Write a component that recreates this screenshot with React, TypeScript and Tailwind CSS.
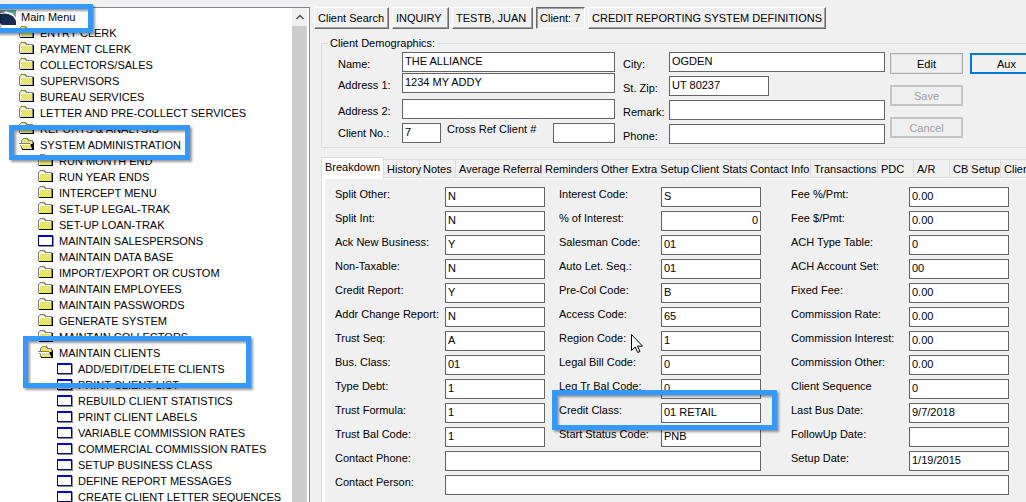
import { useId } from 'react';
import clsx from 'clsx';

type IconKind = 'folder' | 'open' | 'window';

interface TreeNode {
  label: string;
  level: 1 | 2 | 3;
  icon: IconKind;
}

const TREE: TreeNode[] = [
  { label: 'ENTRY CLERK', level: 1, icon: 'folder' },
  { label: 'PAYMENT CLERK', level: 1, icon: 'folder' },
  { label: 'COLLECTORS/SALES', level: 1, icon: 'folder' },
  { label: 'SUPERVISORS', level: 1, icon: 'folder' },
  { label: 'BUREAU SERVICES', level: 1, icon: 'folder' },
  { label: 'LETTER AND PRE-COLLECT SERVICES', level: 1, icon: 'folder' },
  { label: 'REPORTS & ANALYSIS', level: 1, icon: 'folder' },
  { label: 'SYSTEM ADMINISTRATION', level: 1, icon: 'open' },
  { label: 'RUN MONTH END', level: 2, icon: 'folder' },
  { label: 'RUN YEAR ENDS', level: 2, icon: 'folder' },
  { label: 'INTERCEPT MENU', level: 2, icon: 'folder' },
  { label: 'SET-UP LEGAL-TRAK', level: 2, icon: 'folder' },
  { label: 'SET-UP LOAN-TRAK', level: 2, icon: 'folder' },
  { label: 'MAINTAIN SALESPERSONS', level: 2, icon: 'window' },
  { label: 'MAINTAIN DATA BASE', level: 2, icon: 'folder' },
  { label: 'IMPORT/EXPORT OR CUSTOM', level: 2, icon: 'folder' },
  { label: 'MAINTAIN EMPLOYEES', level: 2, icon: 'folder' },
  { label: 'MAINTAIN PASSWORDS', level: 2, icon: 'folder' },
  { label: 'GENERATE SYSTEM', level: 2, icon: 'folder' },
  { label: 'MAINTAIN COLLECTORS', level: 2, icon: 'folder' },
  { label: 'MAINTAIN CLIENTS', level: 2, icon: 'open' },
  { label: 'ADD/EDIT/DELETE CLIENTS', level: 3, icon: 'window' },
  { label: 'PRINT CLIENT LIST', level: 3, icon: 'window' },
  { label: 'REBUILD CLIENT STATISTICS', level: 3, icon: 'window' },
  { label: 'PRINT CLIENT LABELS', level: 3, icon: 'window' },
  { label: 'VARIABLE COMMISSION RATES', level: 3, icon: 'window' },
  { label: 'COMMERCIAL COMMISSION RATES', level: 3, icon: 'window' },
  { label: 'SETUP BUSINESS CLASS', level: 3, icon: 'window' },
  { label: 'DEFINE REPORT MESSAGES', level: 3, icon: 'window' },
  { label: 'CREATE CLIENT LETTER SEQUENCES', level: 3, icon: 'window' },
];

const INDENT = { 1: 'pl-[19px]', 2: 'pl-[38px]', 3: 'pl-[57px]' };

const WINDOWS = [
  { label: 'Client Search', width: 'w-[75px]' },
  { label: 'INQUIRY', width: 'w-[57px]' },
  { label: 'TESTB, JUAN', width: 'w-[81px]' },
  { label: 'Client: 7', width: 'w-[49px]', pressed: true },
  { label: 'CREDIT REPORTING SYSTEM DEFINITIONS', width: 'w-[238px]' },
];

const TABS = [
  { label: 'History', width: 'w-[36px]' },
  { label: 'Notes', width: 'w-[36px]' },
  { label: 'Average Referral', width: 'w-[86px]' },
  { label: 'Reminders', width: 'w-[56px]' },
  { label: 'Other Extra Setup', width: 'w-[90px]' },
  { label: 'Client Stats', width: 'w-[59px]' },
  { label: 'Contact Info', width: 'w-[64px]' },
  { label: 'Transactions', width: 'w-[67px]' },
  { label: 'PDC', width: 'w-[36px]' },
  { label: 'A/R', width: 'w-[36px]' },
  { label: 'CB Setup', width: 'w-[51px]' },
  { label: 'Client', width: 'w-[70px]' },
];

// label / value pairs, three to a row
const BREAKDOWN: [string, string][][] = [
  [['Split Other:', 'N'], ['Interest Code:', 'S'], ['Fee %/Pmt:', '0.00']],
  [['Split Int:', 'N'], ['% of Interest:', '0'], ['Fee $/Pmt:', '0.00']],
  [['Ack New Business:', 'Y'], ['Salesman Code:', '01'], ['ACH Type Table:', '0']],
  [['Non-Taxable:', 'N'], ['Auto Let. Seq.:', '01'], ['ACH Account Set:', '00']],
  [['Credit Report:', 'Y'], ['Pre-Col Code:', 'B'], ['Fixed Fee:', '0.00']],
  [['Addr Change Report:', 'N'], ['Access Code:', '65'], ['Commission Rate:', '0.00']],
  [['Trust Seq:', 'A'], ['Region Code:', '1'], ['Commission Interest:', '0.00']],
  [['Bus. Class:', '01'], ['Legal Bill Code:', '0'], ['Commission Other:', '0.00']],
  [['Type Debt:', '1'], ['Leg Tr Bal Code:', '0'], ['Client Sequence', '0']],
  [['Trust Formula:', '1'], ['Credit Class:', '01 RETAIL'], ['Last Bus Date:', '9/7/2018']],
  [['Trust Bal Code:', '1'], ['Start Status Code:', 'PNB'], ['FollowUp Date:', '']],
];

const COLUMN_PAD = ['', 'pl-[14px]', 'pl-[30px]'];

// checkerboard dots for [y, firstX, lastX] spans
function dither(spans: number[][]) {
  let d = '';
  for (const [y, from, to] of spans) {
    for (let x = from; x <= to; x++) {
      if ((x + y) % 2 === 0) d += `M${x} ${y}h1v1h-1z`;
    }
  }
  return d;
}

const FOLDER_DOTS = dither([[2, 2, 5], [4, 2, 12], [5, 2, 12], [6, 2, 12], [7, 2, 12], [8, 2, 12], [9, 2, 12], [10, 2, 12], [11, 2, 12]]);
const OPEN_DOTS = dither([[3, 3, 8], [4, 3, 12], [5, 3, 12], [8, 2, 10], [9, 3, 11], [10, 4, 11], [11, 4, 12]]);

function TreeIcon({ kind }: { kind: IconKind }) {
  return (
    <svg width="16" height="16" viewBox="0 0 16 16" shapeRendering="crispEdges" className="shrink-0">
      {kind === 'window' && (
        <>
          <path d="M1 3h15v11H1z" fill="#8c8c8c" />
          <path d="M0 2h15v11H0z" fill="#000080" />
          <path d="M0 2h15v2H0z" fill="#0000d8" />
          <path d="M1 4h13v8H1z" fill="#fff" />
        </>
      )}
      {kind === 'folder' && (
        <>
          <path d="M1 13h14V4h-1v8H1z" fill="#000" />
          <path d="M0 3h1V2h1V1h5v1h1v1h6v9H0z" fill="#808080" />
          <path d="M1 3h1V2h4v1h1v1h6v8H1z" fill="#ff0" />
          <path d={FOLDER_DOTS} fill="#d0d0c8" />
          <path d="M1 12V4h1V3h4v1h7v1H2v7z" fill="#fff" />
        </>
      )}
      {kind === 'open' && (
        <>
          <path d="M3 13h12V5h-1v7H3z" fill="#000" />
          <path d="M2 3h1V2h1V1h5v1h1v1h4v9H2z" fill="#808080" />
          <path d="M3 3h1V2h4v1h1v1h4v3H3z" fill="#ff0" />
          <path d="M0 6h11v1h1v2h1v2h1v1H3v-1H2V9H1V7H0z" fill="#808080" />
          <path d="M1 7h10v2h1v2h1v1H4v-1H3V9H2V8H1z" fill="#ff0" />
          <path d={OPEN_DOTS} fill="#d0d0c8" />
          <path d="M1 7h10v1H1z" fill="#fff" />
          <path d="M12 7h2v5h-1v-2h-1z" fill="#000" />
        </>
      )}
    </svg>
  );
}

function MainIcon() {
  return (
    <svg width="16" height="16" viewBox="0 0 16 16" className="shrink-0">
      <rect width="16" height="16" fill="#fff" />
      <path d="M7 1h9v8C14 5 11 3 7 3z" fill="#5bae97" />
      <path d="M0 1h7L4 4H0z" fill="#7d9a9a" />
      <path d="M0 5C7 3 14 6 16 12v4H2L0 14z" fill="#152d55" />
    </svg>
  );
}

function Highlight({ className }: { className: string }) {
  return (
    <div
      className={clsx(
        'pointer-events-none absolute border-[5px] border-[#3399ff] drop-shadow-[2px_2px_1px_rgba(0,0,0,0.4)]',
        className
      )}
    />
  );
}

function TextField({ id, value, className }: { id: string; value: string; className?: string }) {
  return (
    <input
      id={id}
      type="text"
      defaultValue={value}
      className={clsx('h-5 min-w-0 border border-[#646464] bg-white px-0.5 pb-0.5 outline-none', className)}
    />
  );
}

function DemoRow({ label, value, labelWidth, width }: { label: string; value: string; labelWidth: string; width: string }) {
  const id = useId();
  return (
    <div className="flex items-start">
      <label htmlFor={id} className={clsx('shrink-0 pt-1', labelWidth)}>
        {label}
      </label>
      <TextField id={id} value={value} className={width} />
    </div>
  );
}

function PushButton({ label, disabled, focused }: { label: string; disabled?: boolean; focused?: boolean }) {
  return (
    <button
      type="button"
      disabled={disabled}
      className={clsx(
        'h-[21px] w-[73px] shrink-0',
        disabled && 'border-2 border-[#c6c6c6] text-[#a0a0a0]',
        focused && 'border-2 border-[#0078d7]',
        !disabled && !focused && 'border border-[#adadad] ring-1 ring-inset ring-[#e1e1e1]'
      )}
    >
      {label}
    </button>
  );
}

function Sidebar() {
  return (
    <nav className="relative mt-[7px] flex w-[310px] shrink-0 overflow-hidden border-t border-r border-[#828790] bg-white">
      <ul className="min-w-0 flex-1 pt-px whitespace-nowrap">
        <li className="flex h-4 items-center gap-[5px]">
          <MainIcon />
          Main Menu
        </li>
        {TREE.map((node) => (
          <li key={node.label} className={clsx('flex h-4 items-center gap-[5px]', INDENT[node.level])}>
            <TreeIcon kind={node.icon} />
            {node.label}
          </li>
        ))}
      </ul>
      <div className="mr-0.5 flex w-[15px] flex-col bg-[#cdcdcd]">
        <button type="button" aria-label="Scroll up" className="flex h-[18px] items-center justify-center bg-[#f0f0f0]">
          <svg width="8" height="6" viewBox="0 0 8 6">
            <path d="M0.500 5 4 1.500 7.500 5" fill="none" stroke="#505050" strokeWidth="1.500" />
          </svg>
        </button>
      </div>
    </nav>
  );
}

function Demographics() {
  return (
    <fieldset className="mt-2 ml-[11px] flex h-[111px] w-[740px] flex-col border border-[#dcdcdc] pl-4">
      <legend className="-ml-2.5 px-0.5 leading-3">Client Demographics:</legend>
      <div className="flex items-start pt-[3px]">
        <div className="mr-2 flex w-[277px] shrink-0 flex-col">
          <DemoRow label="Name:" value="THE ALLIANCE" labelWidth="w-16" width="flex-1" />
          <div className="mt-px mb-1.5">
            <DemoRow label="Address 1:" value="1234 MY ADDY" labelWidth="w-16" width="flex-1" />
          </div>
          <DemoRow label="Address 2:" value="" labelWidth="w-16" width="flex-1" />
          <div className="mt-1 flex items-start">
            <label htmlFor="client-no" className="w-16 shrink-0 pt-0.5">Client No.:</label>
            <TextField id="client-no" value="7" className="w-[39px]" />
            <label htmlFor="cross-ref" className="w-28 shrink-0 pl-1.5 leading-3">Cross Ref Client #</label>
            <TextField id="cross-ref" value="" className="flex-1" />
          </div>
        </div>
        <div className="mr-[5px] flex w-[262px] shrink-0 flex-col gap-1">
          <DemoRow label="City:" value="OGDEN" labelWidth="w-[46px]" width="flex-1" />
          <DemoRow label="St. Zip:" value="UT 80237" labelWidth="w-[46px]" width="w-[100px]" />
          <DemoRow label="Remark:" value="" labelWidth="w-[46px]" width="flex-1" />
          <DemoRow label="Phone:" value="" labelWidth="w-[46px]" width="flex-1" />
        </div>
        <div className="mr-[7px] flex flex-col gap-[11px] pt-px">
          <PushButton label="Edit" />
          <PushButton label="Save" disabled />
          <PushButton label="Cancel" disabled />
        </div>
        <div className="pt-px">
          <PushButton label="Aux" focused />
        </div>
      </div>
    </fieldset>
  );
}

function Breakdown() {
  return (
    <div className="ml-[11px] flex-1 border-t border-l border-[#dcdcdc]">
      <div className="grid h-full grid-cols-[110px_100px_116px_100px_148px_100px] content-start gap-y-1 border-t border-l-[3px] border-white pt-2 pl-2.5 leading-[14px]">
        {BREAKDOWN.map((row) =>
          row.map(([label, value], col) => (
            <div key={label} className="contents">
              <label htmlFor={label} className={COLUMN_PAD[col]}>{label}</label>
              <TextField id={label} value={value} className={label === '% of Interest:' ? 'text-right' : ''} />
            </div>
          ))
        )}
        <label htmlFor="contact-phone">Contact Phone:</label>
        <TextField id="contact-phone" value="" className="col-span-3" />
        <label htmlFor="setup-date" className="pl-[30px]">Setup Date:</label>
        <TextField id="setup-date" value="1/19/2015" />
        <label htmlFor="contact-person">Contact Person:</label>
        <TextField id="contact-person" value="" className="col-span-5" />
      </div>
    </div>
  );
}

export default function App() {
  return (
    <div className="relative flex h-screen overflow-hidden bg-[#f0f0f0] font-['Liberation_Sans',Arial,sans-serif] text-[11px] leading-4 text-black">
      <Sidebar />

      <main className="flex min-w-0 flex-1 flex-col overflow-hidden whitespace-nowrap">
        <div className="flex gap-[3px] pt-[7px] pl-1">
          {WINDOWS.map(({ label, width, pressed }) => (
            <button
              key={label}
              type="button"
              className={clsx(
                'h-[22px] shrink-0 border pb-px pl-[3px] text-left',
                width,
                pressed
                  ? 'border-t-[#696969] border-r-white border-b-white border-l-[#696969] shadow-[inset_1px_1px_0_#a0a0a0]'
                  : 'border-t-white border-r-[#696969] border-b-[#696969] border-l-white shadow-[inset_-1px_-1px_0_#a0a0a0]'
              )}
            >
              {label}
            </button>
          ))}
        </div>

        <Demographics />

        <div role="tablist" className="mt-[9px] ml-[11px] flex h-5 items-end">
          <button
            type="button"
            role="tab"
            aria-selected="true"
            className="relative z-10 -mb-0.5 h-[22px] w-[63px] shrink-0 border border-b-0 border-[#dcdcdc] bg-white pb-1"
          >
            Breakdown
          </button>
          {TABS.map(({ label, width }) => (
            <button
              key={label}
              type="button"
              role="tab"
              aria-selected="false"
              className={clsx('h-[18px] shrink-0 border-t border-r border-[#dcdcdc] pl-[3px] text-left', width)}
            >
              {label}
            </button>
          ))}
        </div>

        <Breakdown />
      </main>

      <Highlight className="top-1 -left-1.5 h-[29px] w-[99px]" />
      <Highlight className="top-[125px] left-[9px] h-[35px] w-[181px]" />
      <Highlight className="top-[336px] left-[23px] h-[52px] w-[228px]" />
      <Highlight className="top-[390px] left-[552px] h-10 w-[225px]" />

      <svg width="12" height="20" viewBox="0 0 12 20" className="absolute top-[334px] left-[631px]">
        <path d="M.5.5v16l3.700-3.500 2.500 5.500 2.300-1-2.500-5.400h5z" fill="#fff" stroke="#000" />
      </svg>
    </div>
  );
}
